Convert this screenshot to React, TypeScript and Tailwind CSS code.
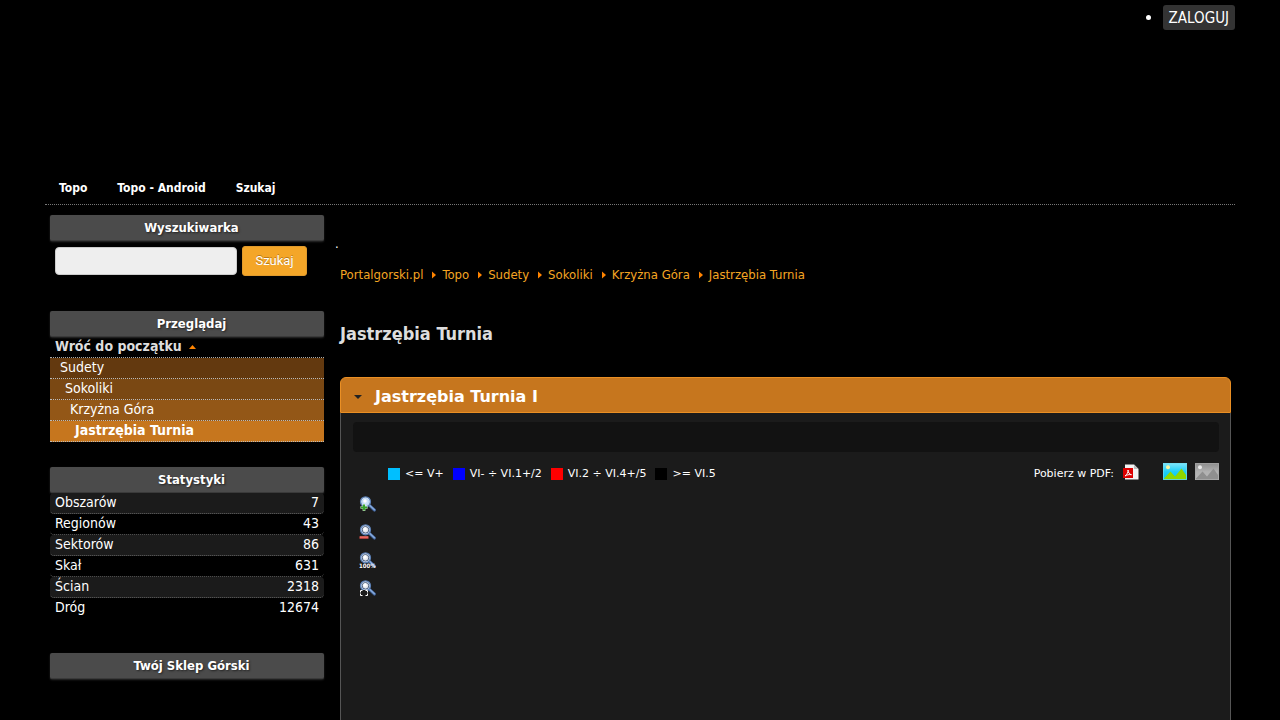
import type { ReactNode } from "react";

const nav = ["Topo", "Topo - Android", "Szukaj"];

const crumbs = ["Portalgorski.pl", "Topo", "Sudety", "Sokoliki", "Krzyżna Góra", "Jastrzębia Turnia"];

const tree = [
  { name: "Sudety", style: "bg-[#63390f] pl-[10px]" },
  { name: "Sokoliki", style: "bg-[#7a4813] pl-[15px]" },
  { name: "Krzyżna Góra", style: "bg-[#935717] pl-[20px]" },
  { name: "Jastrzębia Turnia", style: "bg-[#c6761e] pl-[25px] font-bold" },
];

const stats = [
  ["Obszarów", "7"],
  ["Regionów", "43"],
  ["Sektorów", "86"],
  ["Skał", "631"],
  ["Ścian", "2318"],
  ["Dróg", "12674"],
];

const legend = [
  { label: "<= V+", color: "bg-[#00bfff]" },
  { label: "VI- ÷ VI.1+/2", color: "bg-[#0000ff]" },
  { label: "VI.2 ÷ VI.4+/5", color: "bg-[#ff0000]" },
  { label: ">= VI.5", color: "bg-black" },
];

function PanelHeading({ children }: { children: ReactNode }) {
  return (
    <h2 className="h-[26px] rounded-[2px] border-b border-[#3a3a3a] bg-[#4b4b4b] pl-[9px] text-center text-[13px] leading-[25px] font-bold text-white shadow-[0_1px_2px_#2a2a2a] [text-shadow:1px_1px_2px_#222]">
      {children}
    </h2>
  );
}

function Magnifier({ kind }: { kind: "in" | "out" | "full" | "fit" }) {
  return (
    <svg width="18" height="18" viewBox="0 0 18 18" aria-hidden="true">
      <path d="M10.500 9.500l5 4.600" stroke="#43659c" strokeWidth="3" strokeLinecap="round" />
      <path d="M10.700 9.400l4.700 4.300" stroke="#86a9db" strokeWidth="1.500" strokeLinecap="round" />
      <circle cx="6.500" cy="5.800" r="4.900" fill="#e8eff8" stroke="#5b80b6" strokeWidth="1.400" />
      <circle
        cx="6.500"
        cy="5.800"
        r="3.300"
        fill={kind === "in" ? "#cfe4fa" : "#e6e9ef"}
        stroke={kind === "in" ? "#b9d5f3" : "#4a5f80"}
        strokeWidth="1"
      />
      <circle cx="6" cy="5" r="1.700" fill="#fff" />
      {kind === "in" && (
        <>
          <path d="M5 8v7M1.500 11.500h7" stroke="#e5f5e0" strokeWidth="2.600" />
          <path d="M5 8.500v6M2 11.500h6" stroke="#36a02c" strokeWidth="2" />
        </>
      )}
      {kind === "out" && (
        <>
          <path d="M.5 13.500h9" stroke="#e8504a" strokeWidth="2.400" />
          <path d="M1 13h8" stroke="#f2857b" strokeWidth=".8" />
        </>
      )}
      {kind === "full" && (
        <text x="0" y="16" fontSize="6" fontWeight="bold" fontFamily="DejaVu Sans Condensed, sans-serif" fill="#fff">
          100%
        </text>
      )}
      {kind === "fit" && (
        <>
          <path d="M1 10h8v6H1z" fill="#1b1b1b" />
          <path d="M3.500 10.500h-2v2M6.500 10.500h2v2M3.500 15.500h-2v-2M6.500 15.500h2v-2" stroke="#fff" strokeWidth="1" fill="none" />
        </>
      )}
    </svg>
  );
}

function PdfIcon() {
  return (
    <svg width="16" height="16" viewBox="0 0 16 16" aria-hidden="true">
      <path d="M2 .5h9l4.500 4.500v10.500H2z" fill="#f3f3f3" />
      <path d="M11 .5l4.500 4.500H11z" fill="#bdbdbd" />
      <path d="M0 4h10v10H0z" fill="#dc0000" />
      <path d="M2 12c2-1.500 3.500-4 3-6 0 2.500 1.500 4.500 3.500 4.700C6 10.300 4 10.800 2 12z" fill="none" stroke="#fff" strokeWidth="1" />
    </svg>
  );
}

function PictureIcon({ gray = false }: { gray?: boolean }) {
  const id = gray ? "sky-gray" : "sky-color";
  return (
    <svg width="24" height="17" viewBox="0 0 24 17" aria-hidden="true">
      <defs>
        <linearGradient id={id} x1="0" y1="0" x2="0" y2="1">
          <stop offset="0" stopColor={gray ? "#8c8c8c" : "#82e6fb"} />
          <stop offset=".5" stopColor={gray ? "#b0b0b0" : "#1fd0f8"} />
          <stop offset="1" stopColor={gray ? "#bababa" : "#00c4f5"} />
        </linearGradient>
      </defs>
      <rect width="24" height="17" fill={`url(#${id})`} />
      <circle cx="5" cy="4.200" r="2" fill={gray ? "#e8e8e8" : "#fdf6a0"} />
      <path d="M1 16.500v-1l6.500-7 4.500 5 6.500-8L23 12v4.500z" fill={gray ? "#8f8f8f" : "#8fd800"} />
      <path d="M.5.500h23v16H.5z" fill="none" stroke={gray ? "#a5a5a5" : "#6fdcf0"} strokeOpacity=".7" />
    </svg>
  );
}

export default function App() {
  return (
    <div className="flex min-h-screen flex-col bg-black px-[45px] font-['DejaVu_Sans_Condensed','DejaVu_Sans',sans-serif] text-white">
      <header className="flex h-[170px] justify-end pt-[5px]">
        <ul className="list-disc">
          <li>
            <a href="#login" className="block h-[25px] rounded-[3px] bg-[#333] px-[6px] text-[15px] leading-[26px]">ZALOGUJ</a>
          </li>
        </ul>
      </header>

      <nav className="flex h-[35px] gap-[30px] border-b border-dotted border-[#777] px-[14px] text-[12px] leading-[36px] font-bold">
        {nav.map((item) => (
          <a key={item} href="#nav">{item}</a>
        ))}
      </nav>

      <div className="flex flex-1 gap-[16px] pt-[10px] pr-1 pl-[5px]">
        <aside className="w-[274px] shrink-0">
          <section className="h-[96px]">
            <PanelHeading>Wyszukiwarka</PanelHeading>
            <form className="flex items-center gap-[5px] px-[5px] pt-[5px]">
              <input aria-label="Wyszukiwarka" className="h-7 w-[182px] rounded-[4px] border border-[#ccc] bg-[#eee] px-2 text-[13px] text-black" />
              <button type="button" className="h-[30px] w-[65px] rounded-[3px] border border-[#e09a2c] bg-[#f4a628] font-[Roboto,sans-serif] text-[13px] leading-[26px] [text-shadow:0_-1px_0_#b97a1a]">Szukaj</button>
            </form>
          </section>

          <section className="h-[156px]">
            <PanelHeading>Przeglądaj</PanelHeading>
            <a href="#top" className="flex h-[21px] items-start gap-[7px] border-b border-dotted border-[#aaa] pl-[5px] text-[14px] leading-[18px] font-bold text-[#ddd]">
              Wróć do początku
              <svg className="mt-2" width="7" height="4" viewBox="0 0 7 4" aria-hidden="true"><path d="M3.500 0L7 4H0z" fill="#ff8400" /></svg>
            </a>
            {tree.map((node) => (
              <a key={node.name} href="#area" className={`block h-[21px] border-b border-dotted border-[#bbb] text-[14px] leading-[18px] ${node.style}`}>
                {node.name}
              </a>
            ))}
          </section>

          <section className="h-[186px]">
            <PanelHeading>Statystyki</PanelHeading>
            <dl className="text-[14px] leading-[18px]">
              {stats.map(([label, value]) => (
                <div key={label} className="flex h-[21px] justify-between rounded-[4px] border-b border-dotted border-[#666] px-[5px] last:border-0 odd:bg-[#1b1b1b]">
                  <dt>{label}</dt>
                  <dd>{value}</dd>
                </div>
              ))}
            </dl>
          </section>

          <PanelHeading>Twój Sklep Górski</PanelHeading>
        </aside>

        <main className="flex min-w-0 flex-1 flex-col">
          <p className="-ml-[5px] pt-[19px] text-[13px] leading-[20px]">.</p>
          <nav aria-label="Ścieżka" className="flex pt-[12px] text-[13px] leading-[18px] text-[#f5a623]">
            {crumbs.map((crumb, index) => (
              <span key={crumb} className="flex items-center">
                {index > 0 && (
                  <svg className="mr-[6px] ml-[9px]" width="4" height="8" viewBox="0 0 4 8" aria-hidden="true"><path d="M0 .5L4 4 0 7.500z" fill="#ff8400" /></svg>
                )}
                <a href="#crumb">{crumb}</a>
              </span>
            ))}
          </nav>
          <h1 className="pt-[38px] text-[18px] leading-[24px] font-bold text-[#ddd]">Jastrzębia Turnia</h1>

          <section className="mt-[31px] flex flex-1 flex-col font-['DejaVu_Sans',sans-serif]">
            <h3 className="flex h-[36px] items-center gap-[13px] rounded-t-[6px] border border-[#ea8f24] bg-[#c6761e] pt-[3px] pl-[13px] text-[16px] font-bold">
              <svg width="8" height="4" viewBox="0 0 8 4" aria-hidden="true"><path d="M0 0h8L4 4z" fill="#222" /></svg>
              Jastrzębia Turnia I
            </h3>
            <div className="flex-1 border-x border-[#555] bg-[#1b1b1b] pt-[9px] pr-[11px] pb-3 pl-[12px]">
              <div className="h-[30px] rounded-[4px] bg-[#121212]" />
              <div className="flex h-[42px] items-center pl-[35px] text-[11px]">
                <ul className="flex gap-[9px] pt-[2px]">
                  {legend.map((item) => (
                    <li key={item.label} className="flex items-center gap-[5px]">
                      <span className={`size-[12px] ${item.color}`} />
                      {item.label}
                    </li>
                  ))}
                </ul>
                <div className="ml-auto flex items-center">
                  <span className="pt-[2px]">Pobierz w PDF:</span>
                  <a href="#pdf" aria-label="PDF" className="ml-[9px] pb-[2px]"><PdfIcon /></a>
                  <button type="button" aria-label="Kolor" className="ml-[24px] pb-[3px]"><PictureIcon /></button>
                  <button type="button" aria-label="Skala szarości" className="ml-2 pb-[3px]"><PictureIcon gray /></button>
                </div>
              </div>
              <div className="flex flex-col items-start gap-[10px] pt-[2px] pl-[6px]">
                <button type="button" aria-label="Powiększ"><Magnifier kind="in" /></button>
                <button type="button" aria-label="Pomniejsz"><Magnifier kind="out" /></button>
                <button type="button" aria-label="100%"><Magnifier kind="full" /></button>
                <button type="button" aria-label="Dopasuj"><Magnifier kind="fit" /></button>
              </div>
            </div>
          </section>
        </main>
      </div>
    </div>
  );
}
